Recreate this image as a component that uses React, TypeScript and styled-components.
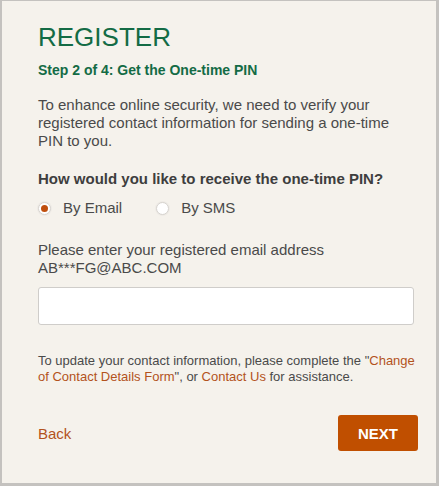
import { FC, useState } from "react";
import styled, { createGlobalStyle } from "styled-components";

const GlobalStyle = createGlobalStyle`
  html, body {
    margin: 0;
    padding: 0;
    background: #f5f2ec;
  }
  * {
    box-sizing: border-box;
  }
`;

type RadioProps = {
  checked: boolean;
};

const App: FC = () => {
  const [method, setMethod] = useState<"email" | "sms">("email");
  const [email, setEmail] = useState("");

  return (
    <>
      <GlobalStyle />
      <SPanel>
        <STitle>REGISTER</STitle>
        <SStep>Step 2 of 4: Get the One-time PIN</SStep>
        <SText>
          To enhance online security, we need to verify your registered contact
          information for sending a one-time PIN to you.
        </SText>
        <SQuestion>How would you like to receive the one-time PIN?</SQuestion>
        <SRadioRow>
          <SRadioLabel onClick={() => setMethod("email")}>
            <SRadio checked={method === "email"} />
            By Email
          </SRadioLabel>
          <SRadioLabel onClick={() => setMethod("sms")}>
            <SRadio checked={method === "sms"} />
            By SMS
          </SRadioLabel>
        </SRadioRow>
        <SPrompt>
          Please enter your registered email address
          <br />
          AB***FG@ABC.COM
        </SPrompt>
        <SInput
          type="text"
          value={email}
          onChange={(e) => setEmail(e.target.value)}
        />
        <SNote>
          To update your contact information, please complete the "
          <SLink href="#">Change of Contact Details Form</SLink>", or{" "}
          <SLink href="#">Contact Us</SLink> for assistance.
        </SNote>
        <SFooter>
          <SBack href="#">Back</SBack>
          <SNextButton>NEXT</SNextButton>
        </SFooter>
      </SPanel>
    </>
  );
};

export default App;

const SPanel = styled.div`
  width: 439px;
  height: 486px;
  border: 2px solid #c4c2bf;
  border-top-width: 1px;
  border-right-width: 3px;
  border-bottom-width: 3px;
  background: #f5f2ec;
  padding: 21px 18px 0 36px;
  font-family: "Liberation Sans", Arial, sans-serif;
  color: #4a4a4a;
  display: flex;
  flex-direction: column;
`;

const STitle = styled.h1`
  margin: 0;
  font-size: 26px;
  font-weight: normal;
  line-height: 30px;
  color: #136b45;
`;

const SStep = styled.h2`
  margin: 9px 0 0;
  font-size: 14px;
  font-weight: bold;
  line-height: 18px;
  color: #136b45;
`;

const SText = styled.p`
  margin: 17px 0 0;
  font-size: 15px;
  line-height: 18px;
  color: #4a4a4a;
`;

const SPrompt = styled(SText)`
  margin-top: 21px;
`;

const SQuestion = styled.p`
  margin: 20px 0 0;
  font-size: 15px;
  font-weight: bold;
  line-height: 18px;
  color: #3e3e3e;
`;

const SRadioRow = styled.div`
  display: flex;
  gap: 34px;
  margin-top: 8px;
`;

const SRadioLabel = styled.label`
  display: flex;
  align-items: center;
  gap: 12px;
  font-size: 15px;
  line-height: 24px;
  color: #4a4a4a;
  cursor: pointer;
`;

const SRadio = styled.span<RadioProps>`
  width: 13px;
  height: 13px;
  border-radius: 50%;
  border: 1px solid #d6d3ce;
  background: #ffffff;
  box-shadow: 0 0 0 1px #eeebe6;
  display: flex;
  align-items: center;
  justify-content: center;

  &::after {
    content: "";
    width: 7px;
    height: 7px;
    border-radius: 50%;
    background: ${(props) => (props.checked ? "#c04f0e" : "transparent")};
  }
`;

const SInput = styled.input`
  margin-top: 10px;
  width: 376px;
  height: 38px;
  border: 1px solid #cfcdca;
  border-radius: 3px;
  background: #ffffff;
  padding: 0 10px;
  font-family: inherit;
  font-size: 15px;
  outline: none;
`;

const SNote = styled.p`
  margin: 28px 0 0;
  font-size: 13px;
  line-height: 16px;
  color: #4a4a4a;
`;

const SLink = styled.a`
  color: #b3531c;
  text-decoration: none;
`;

const SBack = styled(SLink)`
  font-size: 15px;
`;

const SFooter = styled.div`
  display: flex;
  justify-content: space-between;
  align-items: center;
  margin-top: 30px;
`;

const SNextButton = styled.button`
  width: 80px;
  height: 36px;
  border: none;
  border-radius: 3px;
  background: #c04f00;
  color: #ffffff;
  font-family: "Liberation Sans", Arial, sans-serif;
  font-size: 15px;
  font-weight: bold;
  cursor: pointer;
`;
